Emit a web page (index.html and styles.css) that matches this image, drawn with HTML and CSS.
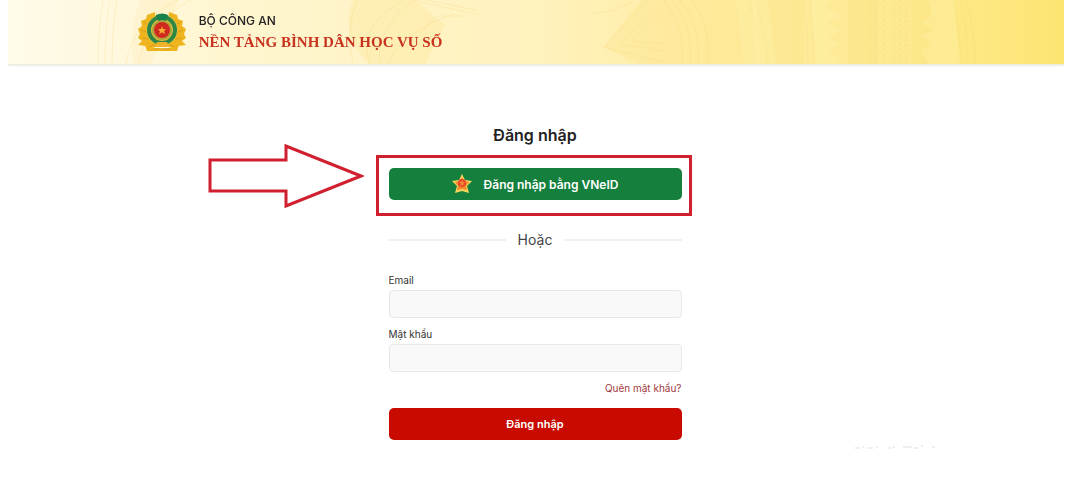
FILE: index.html
```html
<!DOCTYPE html>
<html lang="vi">

<head>
    <meta charset="UTF-8">
    <meta name="viewport" content="width=device-width, initial-scale=1">
    <title>Nền tảng Bình dân học vụ số</title>
    <link rel="stylesheet" href="styles.css">
</head>

<body>

    <header class="header">
        <!-- trống đồng -->
        <svg class="header-pattern" viewBox="0 0 1056 64" preserveAspectRatio="none" aria-hidden="true">
            <g fill="#fbe07a" opacity=".22">
                <path d="M345 0h62l30 25-20 39h-56q-30-30-16-64z"/>
                <path d="M132 0h39l-28 64h-18q-4-36 7-64z" opacity=".5"/>
                <path d="M634 0h70q26 30 22 64h-95l-36-17zM690 0h38l8 64h-20q-4-38-26-64z"/>
                <path d="M748 0h48v64h-40zM840 0h30v64h-30zM905 0h22l-6 14 14 4-12 8 8 10-12 8 12 8-6 12h-20z"/>
            </g>
            <g fill="none" stroke="#f5d577" opacity=".28">
                <path d="M90 64q0-34 5-64M97 64q0-34 5-64M104 64q0-34 5-64M118 64q6-42 52-64M130 64q8-38 52-64"/>
                <path d="M345 64q-8-32 4-64M362 64q-14-38 34-64M372 64q-6-34 34-64M394 50l36-34 26 0M380 64q10-30 66-50M405 0l66 15M418 0l50 10"/>
                <path d="M582 14q28-2 44-14M640 0l-44 47 60 15M648 6l-36 38 48 8M652 14l-28 27 34 3"/>
                <path d="M656 0q22 28 18 64M664 0q22 28 18 64M672 0q22 28 18 64M684 0q20 28 16 64"/>
                <path d="M740 0q12 30 14 64M746 0q12 30 14 64M796 0q4 30 4 64M802 0q4 30 4 64M945 0q8 32 8 64M952 0q8 32 8 64M959 0q8 32 8 64"/>
            </g>
            <g fill="#fff3b0" opacity=".3">
                <path d="M744 0h16l8 64h-20zM802 0h22l-6 8 16 8-14 6 14 8-14 8 14 6-14 8 14 6-6 6h-20z"/>
                <path d="M920 0h26l6 64h-32l-8-14 12-6-12-8 12-6-12-8 12-6z"/>
            </g>
            <g fill="none" stroke="#f4d670" stroke-width="2" stroke-dasharray="3 3" opacity=".25">
                <path d="M862 0v64M868 2v62M876 0v64M886 2v62M892 0v64M898 2v62"/>
            </g>
        </svg>
        <div class="brand">
            <svg class="brand-logo" viewBox="0 0 50 40" role="img" aria-label="Bộ Công an">
                <g fill="#eeb51f">
                    <path d="M18 0l-8 3-1 4-5 2 1 5-4 3 2 5-2 4 4 3-4 4 8 1 5 2 5-1z"/>
                    <path d="M32 0l8 3 1 4 5 2-1 5 4 3-2 5 2 4-4 3 4 4-8 1-5 2-5-1z"/>
                    <path d="M8 33q17 7 34 0l-2 6H10z"/>
                </g>
                <g fill="none" stroke="#d99c1a" stroke-width="1">
                    <path d="M7 10l5 4M4 18l7 3M5 26l7 1M12 35l7-3M43 10l-5 4M46 18l-7 3M45 26l-7 1M38 35l-7-3M17 37h16"/>
                </g>
                <circle cx="25" cy="18" r="16" fill="#dfbe3b"/>
                <circle cx="25" cy="18" r="13" fill="none" stroke="#2d8645" stroke-width="4"/>
                <path d="M19 3q6-3 12 0l-2 6h-8z" fill="#16834a"/>
                <circle cx="25" cy="18" r="9" fill="none" stroke="#a9a53c" stroke-width="2"/>
                <circle cx="25" cy="18" r="8" fill="#cf2920"/>
                <path d="M25 14l1 3 3 .3-2 2 1 3-3-2-3 2 1-3-2-2 3-.3z" fill="#f7ac35"/>
                <path d="M20 30h10l2 5H18z" fill="#f0b32c"/>
            </svg>
            <div class="brand-text">
                <span class="brand-org">BỘ CÔNG AN</span>
                <span class="brand-name">NỀN TẢNG BÌNH DÂN HỌC VỤ SỐ</span>
            </div>
        </div>
    </header>

    <main class="container">
        <form class="login">
            <h1>Đăng nhập</h1>

            <div class="vneid">
                <button type="button" class="btn btn-vneid">
                    <svg class="vneid-icon" viewBox="0 0 20 20" aria-hidden="true">
                        <path d="M10 0l3 6 7 1-5 5 2 7-7-2-7 2 2-7-5-5 7-1z" fill="#f8d45c"/>
                        <path d="M10 3l2 4 5 1-3 4 1 4-5-1-5 1 1-4-3-4 5-1z" fill="#f18a2b"/>
                        <circle cx="10" cy="9" r="4" fill="#e9432b"/>
                        <path d="M10 6l1 2h2l-2 2 1 2-2-1-2 1 1-2-2-2h2z" fill="#f58a35"/>
                    </svg>
                    Đăng nhập bằng VNeID
                </button>
                <span class="marker"></span>
                <svg class="arrow" viewBox="0 0 156 66" aria-hidden="true">
                    <path d="M2 17h76V3l75 30-75 30V48H2z" fill="none" stroke="#d0202f" stroke-width="3"/>
                </svg>
            </div>

            <div class="divider"><span>Hoặc</span></div>

            <label for="email">Email</label>
            <input type="email" id="email" name="email">

            <label for="password">Mật khẩu</label>
            <input type="password" id="password" name="password">

            <a class="forgot" href="#">Quên mật khẩu?</a>

            <button type="submit" class="btn btn-login">Đăng nhập</button>
        </form>
    </main>

    <svg class="trace" viewBox="0 0 84 6" aria-hidden="true">
        <path d="M1 4h5M8 3h2M13 4h6M22 3h2M34 4h3M39 3h2M49 3h9M60 4h5M67 2h2M78 3h3" fill="none" stroke="#efefef" stroke-width="2"/>
    </svg>

</body>

</html>
```
FILE: styles.css
```css
* {
    box-sizing: border-box;
}

body {
    margin: 0 2px 0 8px;
    background-color: #fff;
    color: #222;
    font-family: Inter, "Noto Sans", sans-serif;
}

.header {
    position: relative;
    height: 65px;
    background: linear-gradient(90deg, #fffbea 0%, #fff5cf 22%, #fff2bd 50%, #feeca0 68%, #fde98f 85%, #fde572 100%);
    border-bottom: 1px solid #eeeadb;
    box-shadow: 0 1px 2px rgba(0, 0, 0, .08);
}

.header-pattern {
    position: absolute;
    top: 0;
    left: 0;
    width: 100%;
    height: 100%;
}

.brand {
    position: relative;
    display: flex;
    align-items: center;
    gap: 12px;
    height: 64px;
    margin-left: 12%;
    padding-left: 2px;
}

.brand-logo {
    width: 50px;
    height: 40px;
}

.brand-text {
    display: flex;
    flex-direction: column;
}

.brand-org {
    font-size: 12px;
    font-weight: 500;
    line-height: 20px;
}

.brand-name {
    color: #c8321f;
    font-family: "Liberation Serif", serif;
    font-size: 15px;
    font-weight: bold;
    line-height: 22px;
}

.container {
    padding: 58px 18px 0 16px;
}

.login {
    display: flex;
    flex-direction: column;
    max-width: 293px;
    margin: 0 auto;
}

h1 {
    margin: 0 0 21px;
    font-size: 16px;
    font-weight: 600;
    line-height: 24px;
    text-align: center;
}

.btn {
    display: flex;
    align-items: center;
    justify-content: center;
    width: 100%;
    height: 32px;
    border: 0;
    border-radius: 5px;
    color: #fff;
    font-family: inherit;
    font-size: 12px;
    font-weight: 600;
    cursor: pointer;
}

.vneid {
    position: relative;
}

.btn-vneid {
    gap: 12px;
    background-color: #15803d;
}

.vneid-icon {
    width: 20px;
    height: 20px;
}

.marker {
    position: absolute;
    inset: -13px -10px -16px -13px;
    border: 3px solid #d0202f;
    pointer-events: none;
}

.arrow {
    position: absolute;
    top: -25px;
    right: calc(100% + 25px);
    width: 156px;
    height: 66px;
}

.divider {
    display: flex;
    align-items: center;
    gap: 12px;
    margin: 28px 0 20px;
    color: #444;
    font-size: 14px;
    line-height: 24px;
}

.divider::before,
.divider::after {
    content: "";
    flex: 1;
    height: 2px;
    background-color: #f0f0f0;
}

label {
    margin-bottom: 2px;
    color: #333;
    font-size: 10px;
    line-height: 16px;
}

input {
    width: 100%;
    height: 28px;
    margin-bottom: 8px;
    padding: 0 8px;
    border: 1px solid #e8e8e8;
    border-radius: 4px;
    background-color: #f9f9f9;
    font-family: inherit;
    font-size: 12px;
}

.forgot {
    align-self: flex-end;
    margin-bottom: 12px;
    color: #a23a3f;
    font-size: 10px;
    line-height: 16px;
    text-decoration: none;
}

.btn-login {
    background-color: #c80a00;
    font-size: 11px;
}

.trace {
    display: block;
    width: 84px;
    height: 6px;
    margin: 4px 126px 0 auto;
}
```
